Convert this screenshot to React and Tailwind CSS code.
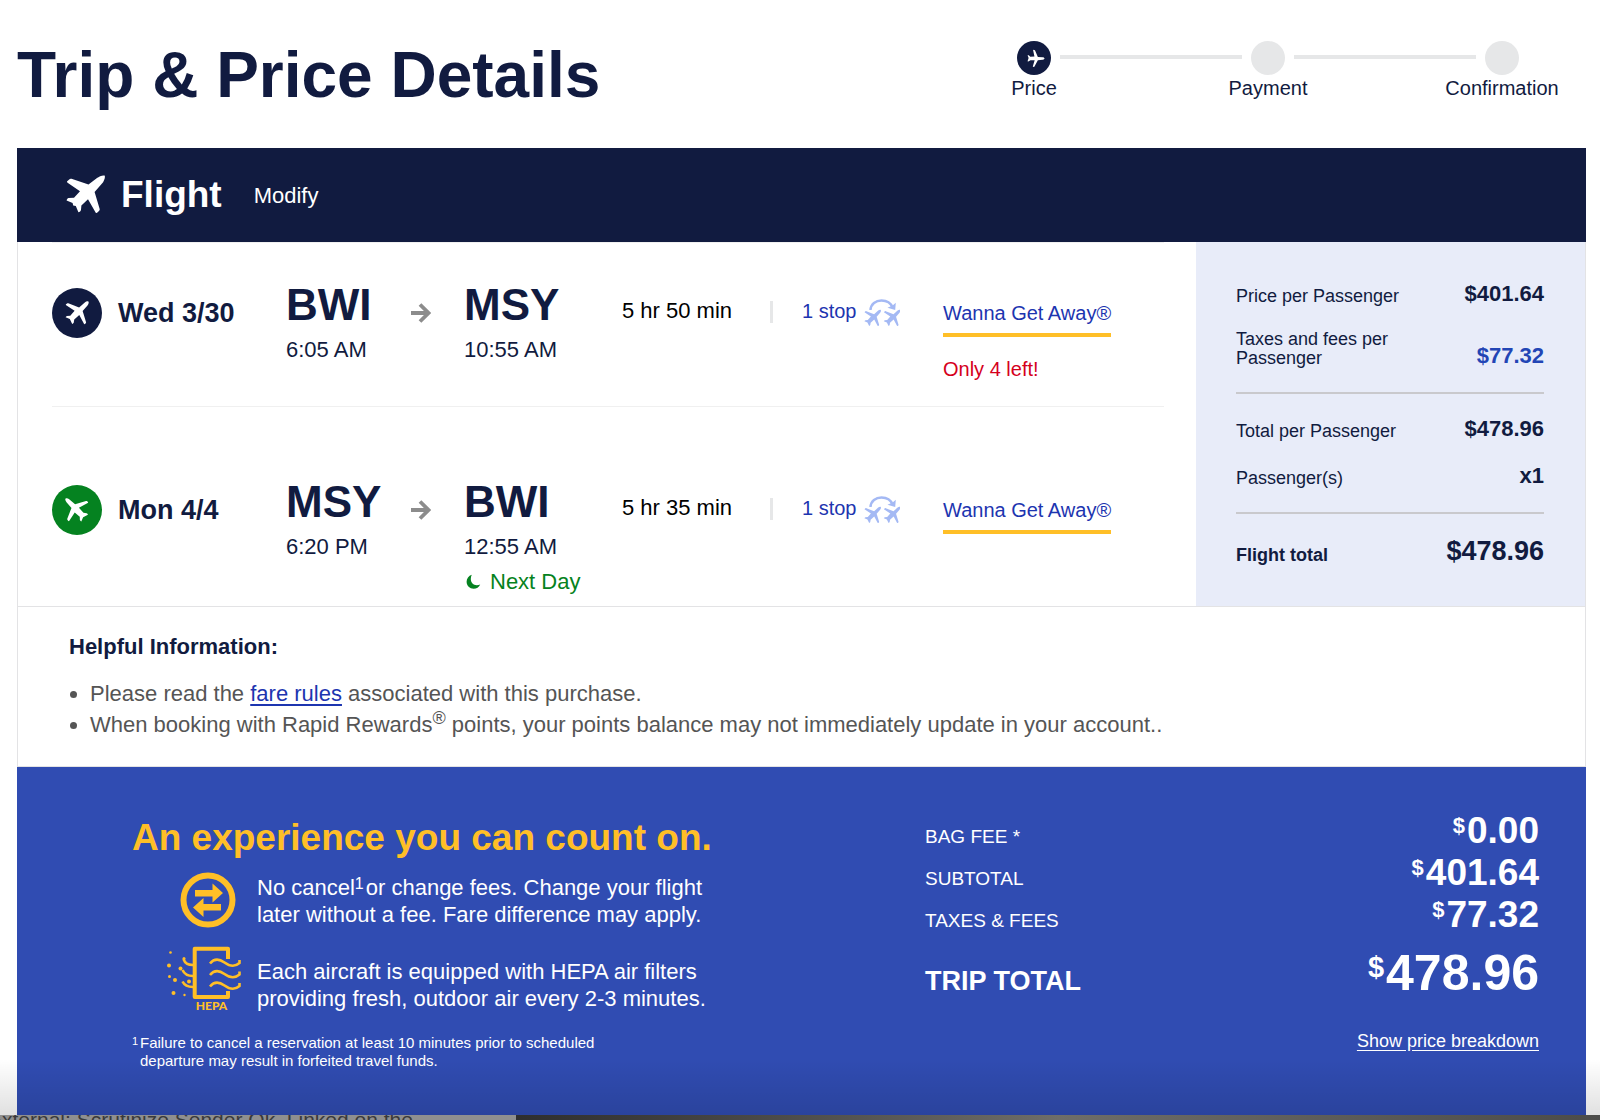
import React from "react";
import clsx from "clsx";

const steps = [
  { label: "Price", active: true },
  { label: "Payment", active: false },
  { label: "Confirmation", active: false },
];

const flights = [
  {
    date: "Wed 3/30",
    from: "BWI",
    departs: "6:05 AM",
    to: "MSY",
    arrives: "10:55 AM",
    duration: "5 hr 50 min",
    seatsLeft: "Only 4 left!",
  },
  {
    date: "Mon 4/4",
    from: "MSY",
    departs: "6:20 PM",
    to: "BWI",
    arrives: "12:55 AM",
    duration: "5 hr 35 min",
    nextDay: true,
    returning: true,
  },
];

const fees = [
  { label: "BAG FEE *", amount: "0.00" },
  { label: "SUBTOTAL", amount: "401.64" },
  { label: "TAXES & FEES", amount: "77.32" },
];

const planePath =
  "M38.6 .6C37 -.2 33 1.4 31 3L22.5 9.6 5.5 3.8C4.5 3.5 3.8 3.8 3.2 4.4L1.2 6.2C.8 6.8 1 7.400 1.600 7.800L14 16.200 8 22.800 2.600 23C1.600 23.200 .6 24.600 .6 25.400L6.600 28 7.200 30.600 9.800 31 12.400 37.200C13.600 37.200 14.800 36 15 34.800L15.400 30.400 22 24.200 29.600 37.400C30 38.200 30.800 38.200 31.400 37.600L33.200 35.800C33.800 35.200 33.800 34.600 33.600 33.800L28.600 17 36 8.600C38 6.200 39.600 2.200 38.600 .6Z";

// thinner plane used in the badges and the stop icon
const slimPlanePath =
  "M39 1C37.600 -.2 35 .8 33 2.500L23.500 10.800 5.500 3.800C4.800 3.500 4 3.800 3.400 4.200L1.600 5.600C1.200 6.200 1.400 6.600 2 7.200L16 16.200 8.800 24.600 3.200 24.800C2.200 25.200 1.200 26.400 1 27.200L8 30.200 12 38.200C13.200 38 14.400 37 14.600 36L15.400 30.800 23.800 23.200 31.600 37.800C32 38.600 32.600 38.800 33.200 38.200L34.600 37C35.200 36.400 35.200 35.800 35 35L29.400 16.800 37.500 7.500C39.500 5 40 2.200 39 1Z";

function PlaneIcon({ className, slim = true }) {
  return (
    <svg viewBox="0 0 40 40" fill="currentColor" className={className} aria-hidden="true">
      <path d={slim ? slimPlanePath : planePath} />
    </svg>
  );
}

function ArrowIcon() {
  return (
    <svg viewBox="0 0 20 20" className="h-5 w-5 text-[#8c8c8c]" fill="none" aria-hidden="true">
      <path d="M0 10h17M9 1.5L17.500 10 9 18.500" stroke="currentColor" strokeWidth="3.800" />
    </svg>
  );
}

function MoonIcon() {
  return (
    <svg viewBox="0 0 16 16" className="ml-0.5 h-4 w-4" fill="currentColor" aria-hidden="true">
      <path d="M5.800 .8C2.600 1.800 .6 4.600 .6 7.800c0 4 3.200 7 7 7 2.900 0 5.500-1.800 6.600-4.400-1 .5-2.200.8-3.400.8C7.400 11.200 4.800 8.600 4.800 5c0-1.500.3-3 1-4.200z" />
    </svg>
  );
}

function PlaneChangeIcon() {
  return (
    <svg viewBox="0 0 36 28" className="h-7 w-9 text-[#a4b9f4]" aria-hidden="true">
      <path
        d="M6.500 11C6.800 5 11.800 1.500 17.500 1.500c5.500 0 9.500 3 11 7"
        fill="none"
        stroke="currentColor"
        strokeWidth="2.400"
      />
      <path d="M23.500 8.800l7.700 2.200.6-7.200-3.200 2.800z" fill="currentColor" />
      <path d={slimPlanePath} fill="currentColor" transform="translate(0 10.500) scale(.43)" />
      <path d={slimPlanePath} fill="currentColor" transform="translate(19.400 10.500) scale(.43)" />
    </svg>
  );
}

function SwapIcon() {
  return (
    <svg viewBox="0 0 56 56" className="h-14 w-14 text-[#ffbf27]" aria-hidden="true">
      <circle cx="28" cy="28" r="24.500" fill="none" stroke="currentColor" strokeWidth="6" />
      <path
        d="M15 18h17.500v-6.500L43 21 32.500 30.500V24.500H15zM41 32H23.500v-6L13 35.500 23.500 45v-6.500H41z"
        fill="currentColor"
      />
    </svg>
  );
}

function HepaIcon() {
  return (
    <svg
      viewBox="0 0 84 66"
      className="h-[66px] w-[84px] overflow-visible text-[#ffbf27]"
      aria-hidden="true"
    >
      <g fill="none" stroke="currentColor" strokeWidth="4">
        <path d="M62 13V2.700H28.700V51H62V45" strokeLinejoin="round" />
        <g strokeWidth="2.600">
          <path d="M44 17.500c4-5 9-5 14.500-1s11 4 15 .5v-3" />
          <path d="M44 29c4-5 9-5 14.500-1s11 4 15 .5v-3" />
          <path d="M44 40.500c4-5 9-5 14.500-1s11 4 15 .5v-3" />
          <path d="M17.500 13c1.500 4.500 4 6 9.500 6M16.500 24c2 4.500 5 6 10.500 6M16.500 35.500c2 4 5 5.500 10.500 5.500" />
        </g>
      </g>
      <g fill="currentColor">
        <circle cx="4.500" cy="6.500" r="1.300" />
        <circle cx="3" cy="19.500" r="2" />
        <circle cx="18" cy="12.500" r="1.500" />
        <circle cx="14.500" cy="22.500" r="2" />
        <circle cx="3.500" cy="30.500" r="1.500" />
        <circle cx="9" cy="34" r="2" />
        <circle cx="23" cy="35.500" r="2" />
        <circle cx="7.500" cy="47" r="2" />
        <circle cx="18.500" cy="49" r="1.200" />
      </g>
      <text
        x="45.500"
        y="64"
        textAnchor="middle"
        fill="currentColor"
        className="font-['Lato',sans-serif] text-[12px] font-black"
      >
        HEPA
      </text>
    </svg>
  );
}

function Stepper() {
  return (
    <ol className="mt-[41px] mr-[81px] flex w-[502px] gap-[9px] text-[20px] leading-6">
      {steps.map((step, i) => (
        <React.Fragment key={step.label}>
          {i > 0 && <li aria-hidden="true" className="mt-[14px] h-1 flex-1 bg-[#e6e7e8]" />}
          <li className="flex w-[34px] flex-col items-center gap-[1px]">
            <span
              className={clsx(
                "flex h-[34px] w-[34px] shrink-0 items-center justify-center rounded-full",
                step.active ? "bg-[#111b40] text-white" : "bg-[#e6e7e8]"
              )}
            >
              {step.active && <PlaneIcon className="h-[15px] w-[15px] rotate-45" />}
            </span>
            <span>{step.label}</span>
          </li>
        </React.Fragment>
      ))}
    </ol>
  );
}

function FlightRow({ flight }) {
  return (
    <li
      className={clsx(
        "grid grid-cols-[234fr_125fr_53fr_158fr_148fr_32fr_141fr_221fr] items-start border-t border-[#f0f0f0]",
        flight.returning ? "pt-[71px] pb-[10px]" : "pt-[38px] pb-[25px]"
      )}
    >
      <div className="mt-[7px] flex items-center gap-4">
        <span
          className={clsx(
            "flex h-[50px] w-[50px] items-center justify-center rounded-full text-white",
            flight.returning ? "bg-[#058220]" : "bg-[#111b40]"
          )}
        >
          <PlaneIcon className={clsx("h-6 w-6", flight.returning && "-rotate-90")} />
        </span>
        <span className="text-[27px] font-bold">{flight.date}</span>
      </div>
      <div>
        <div className="text-[44px] leading-[48px] font-bold">{flight.from}</div>
        <div className="mt-[7px] text-[22px] leading-7">{flight.departs}</div>
      </div>
      <div className="mt-[7px] flex h-[50px] items-center">
        <ArrowIcon />
      </div>
      <div>
        <div className="text-[44px] leading-[48px] font-bold">{flight.to}</div>
        <div className="mt-[7px] text-[22px] leading-7">{flight.arrives}</div>
        {flight.nextDay && (
          <div className="mt-[7px] flex items-center gap-2 text-[22px] leading-7 text-[#058220]">
            <MoonIcon />
            Next Day
          </div>
        )}
      </div>
      <div className="mt-4 text-[22px] leading-7 text-black">{flight.duration}</div>
      <div className="mt-5 h-[22px] w-[3px] bg-[#e6e7e8]" />
      <button type="button" className="mt-4 flex gap-2 text-[20px] leading-7 text-[#1d35b0]">
        1 stop
        <span className="pt-0.5">
          <PlaneChangeIcon />
        </span>
      </button>
      <div className="mt-5 text-[20px] leading-6">
        <a href="#fare" className="inline-block border-b-4 border-[#ffbf27] pb-2 text-[#1d35b0]">
          Wanna Get Away®
        </a>
        {flight.seatsLeft && <div className="mt-5 text-[#d5001c]">{flight.seatsLeft}</div>}
      </div>
    </li>
  );
}

function PriceRow({ label, value, valueClass = "text-[22px] leading-6", labelClass }) {
  return (
    <div className="flex items-end justify-between">
      <dt className={clsx("w-[170px] text-[18px] leading-[19px]", labelClass)}>{label}</dt>
      <dd className={clsx("font-bold", valueClass)}>{value}</dd>
    </div>
  );
}

function PricePanel() {
  return (
    <dl className="w-[389px] shrink-0 bg-[#e8ecf9] pt-10 pr-[41px] pl-10">
      <div className="flex flex-col gap-6">
        <PriceRow label="Price per Passenger" value="$401.64" />
        <PriceRow
          label="Taxes and fees per Passenger"
          value="$77.32"
          valueClass="text-[22px] leading-6 text-[#2245b5]"
        />
      </div>
      <div className="mt-6 flex flex-col gap-[23px] border-t-2 border-[#c9c9cd] pt-[23px]">
        <PriceRow label="Total per Passenger" value="$478.96" />
        <PriceRow label="Passenger(s)" value="x1" />
      </div>
      <div className="mt-6 border-t-2 border-[#c9c9cd] pt-[23px]">
        <PriceRow
          label="Flight total"
          value="$478.96"
          labelClass="font-bold"
          valueClass="text-[27px] leading-7"
        />
      </div>
    </dl>
  );
}

function TripTotal() {
  return (
    <div className="w-[614px] shrink-0 pt-[43px]">
      <dl>
        {fees.map((fee) => (
          <div key={fee.label} className="flex items-baseline justify-between">
            <dt className="text-[19px] leading-6">{fee.label}</dt>
            <dd className="text-[37px] leading-[42px] font-bold">
              <span className="mr-0.5 align-[10px] text-[22px] leading-none">$</span>
              {fee.amount}
            </dd>
          </div>
        ))}
        <div className="mt-[9px] flex items-baseline justify-between font-bold">
          <dt className="text-[27px] leading-8">TRIP TOTAL</dt>
          <dd className="text-[50px] leading-14">
            <span className="mr-0.5 align-[13px] text-[29px] leading-none">$</span>
            478.96
          </dd>
        </div>
      </dl>
      <div className="mt-[26px] text-right">
        <button type="button" className="text-[18px] leading-7 underline underline-offset-3">
          Show price breakdown
        </button>
      </div>
    </div>
  );
}

function App() {
  return (
    <div className="overflow-hidden bg-white font-['Liberation_Sans',Arial,sans-serif] text-[#111b40]">
      <header className="flex h-[148px] items-start justify-between pl-[17px]">
        <h1 className="mt-[38px] text-[64px] leading-[74px] font-bold">Trip &amp; Price Details</h1>
        <Stepper />
      </header>

      <main className="mr-[14px] ml-[17px]">
        <div className="flex h-[94px] items-center bg-[#111b40] pl-[49px] text-white">
          <PlaneIcon slim={false} className="h-10 w-10" />
          <h2 className="ml-[15px] text-[37px] font-bold">Flight</h2>
          <button type="button" className="ml-8 text-[22px]">
            Modify
          </button>
        </div>

        <section className="flex border-x border-b border-[#e3e3e5]">
          <ul className="flex-1 pr-8 pl-[34px]">
            {flights.map((flight) => (
              <FlightRow key={flight.date} flight={flight} />
            ))}
          </ul>
          <PricePanel />
        </section>

        <section className="border-x border-b border-[#e3e3e5] pt-[26px] pb-[26px] pl-[51px]">
          <h3 className="text-[22px] leading-7 font-bold">Helpful Information:</h3>
          <ul className="mt-[18px] list-disc pl-[21px] text-[22px] leading-[30px] text-[#555555]">
            <li>
              Please read the{" "}
              <a href="#rules" className="text-[#1d35b0] underline underline-offset-3">
                fare rules
              </a>{" "}
              associated with this purchase.
            </li>
            <li>
              When booking with Rapid Rewards
              <span className="align-[8px] text-[18px] leading-none">®</span> points, your points
              balance may not immediately update in your account..
            </li>
          </ul>
        </section>

        <section className="flex bg-[#304cb2] pr-[47px] pb-[45px] pl-[115px] text-white">
          <div className="flex-1 pt-[49px]">
            <h2 className="text-[37px] leading-11 font-bold text-[#ffbf27]">
              An experience you can count on.
            </h2>
            <div className="mt-3 flex items-end gap-[7px] pl-[34px] text-[22px] leading-[27px]">
              <div className="flex w-[84px] justify-center">
                <SwapIcon />
              </div>
              <p>
                No cancel
                <span className="mr-0.5 align-[6px] text-[16px] leading-none">1</span>
                or change fees. Change your flight
                <br />
                later without a fee. Fare difference may apply.
              </p>
            </div>
            <div className="mt-[18px] flex items-end gap-[7px] pl-[34px] text-[22px] leading-[27px]">
              <HepaIcon />
              <p>
                Each aircraft is equipped with HEPA air filters
                <br />
                providing fresh, outdoor air every 2-3 minutes.
              </p>
            </div>
            <div className="mt-[22px] flex text-[15px] leading-[18px]">
              <span className="w-2 text-[11px] leading-[14px]">1</span>
              <p>
                Failure to cancel a reservation at least 10 minutes prior to scheduled
                <br />
                departure may result in forfeited travel funds.
              </p>
            </div>
          </div>
          <TripTotal />
        </section>
      </main>

      {/* shadow and the sliver of the window underneath */}
      <div className="pointer-events-none relative -mt-14 h-14 bg-linear-to-t from-black/12 to-transparent" />
      <footer className="flex h-[5px] overflow-hidden">
        <p className="w-[516px] bg-[#8f8f8f] text-[21px] leading-[9px] whitespace-nowrap text-[#3a3a3a]">
          <span className="-ml-3">External: Scrutinize Sender Ok. Linked on the</span>
        </p>
        <div className="flex-1 bg-linear-to-r from-[#2e2e2e] via-[#6e6d68] to-[#4c4c4a]" />
      </footer>
    </div>
  );
}

export default App;
